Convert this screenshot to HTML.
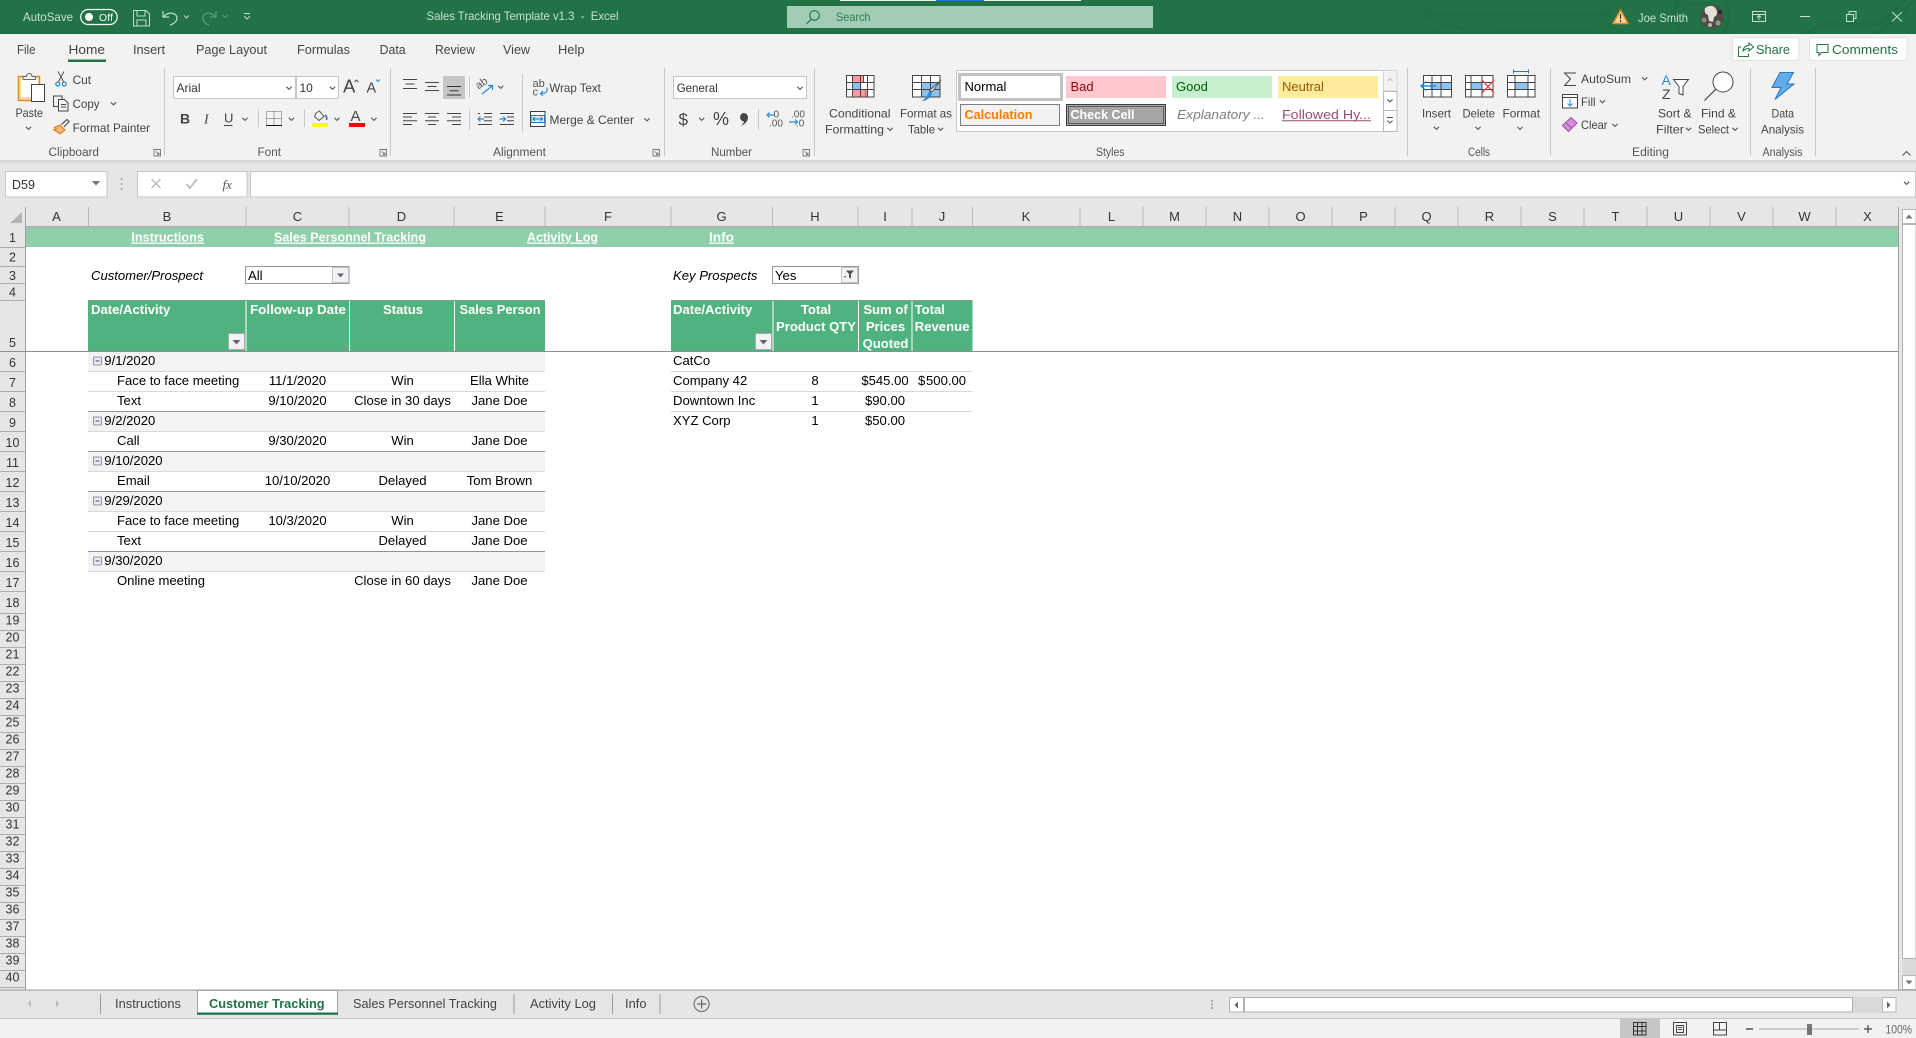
<!DOCTYPE html>
<html lang="en">
<head>
<meta charset="utf-8">
<title>Sales Tracking Template v1.3 - Excel</title>
<style>
html,body{margin:0;padding:0;background:#fff;width:1916px;height:1038px;overflow:hidden}
svg{display:block;position:absolute;left:0;top:0}
text{font-family:"Liberation Sans",Arial,sans-serif;white-space:pre}
.tb{font-size:12px;fill:#c9e0d2}
.tab{font-size:13px;fill:#444}
.r{font-size:11.8px;fill:#444}
.lbl{font-size:11.5px;fill:#555}
.c{font-size:13.1px;fill:#000}
.m{text-anchor:middle}
.h{font-size:13.1px;font-weight:bold;fill:#fff}
.l{font-size:13px;font-weight:bold;fill:#fff;text-decoration:underline}
.col{font-size:13px;fill:#333;text-anchor:middle}
.row{font-size:12.5px;fill:#333;text-anchor:middle}
.st{font-size:12.5px;fill:#444}
.ic{fill:none;stroke:#444;stroke-width:1}
.bl{fill:none;stroke:#1f8fdc;stroke-width:1.2}
</style>
</head>
<body>
<svg width="1916" height="1038" viewBox="0 0 1916 1038" xmlns="http://www.w3.org/2000/svg">
<defs>
<path id="c" d="M-2.6-1.2L0 1.4L2.6-1.2" fill="none" stroke="#555" stroke-width="1.1"/>
<path id="d" d="M-4-2H4L0 2.5Z" fill="#777"/>
<g id="fb"><rect x=".5" y=".5" width="16" height="16" fill="#f1f1f8" stroke="#a8a8a8"/><path d="M4.5 7h8L8.5 11.5Z" fill="#666"/></g>
<g id="exp"><rect x="93.5" y=".5" width="8" height="8" rx="1" fill="#e9ecf3" stroke="#8d93a6"/><path d="M95.5 4.5h4" stroke="#40465a"/></g>
</defs>

<!-- title bar -->
<rect width="1916" height="34" fill="#217346"/>
<rect x="840" y="0" width="241" height="1" fill="#f0f0f0"/><rect x="936" y="0" width="48" height="1" fill="#1a78d0"/>
<g fill="none" stroke="#1f6d42">
<path d="M1429 14H1607" stroke-width="3"/><circle cx="1429" cy="14" r="3.5" stroke-width="2"/><circle cx="1607" cy="14" r="3.5" stroke-width="2"/>
<circle cx="1450" cy="45" r="20" stroke-width="3"/><path d="M1499 31H1590" stroke-width="3"/><circle cx="1495" cy="31" r="3" stroke-width="2"/>
<path d="M1607 24L1625 34" stroke-width="3"/>
<circle cx="1702" cy="15" r="27" stroke-width="4"/><path d="M1690 4H1712L1700 30" stroke-width="3"/>
<path d="M1808 34L1820 24H1880L1905 0" stroke-width="3"/><path d="M1878 34L1916 0" stroke-width="3"/>
</g>
<text class="tb" x="23" y="21" textLength="50" lengthAdjust="spacingAndGlyphs">AutoSave</text>
<rect x="80.7" y="9.5" width="36.5" height="15" rx="7.5" fill="none" stroke="#fff" stroke-width="1.2"/>
<circle cx="89" cy="17" r="4" fill="#fff"/>
<text x="99" y="21" font-size="10.5" fill="#fff" textLength="14">Off</text>
<g fill="none" stroke="#c0dccb" stroke-width="1"><path d="M133.5 10.500H146L149.500 14V26H133.500Z"/><path d="M137 10.500V16H145V10.500M137 26V20H146V26"/></g>
<g fill="none" stroke="#c0dccb" stroke-width="1.2"><path d="M163 11V17H169M163.500 17C168 11 177 12.500 177 18C177 21 174 24 170 25"/></g>
<g fill="none" stroke="#5f9c7c" stroke-width="1.2"><path d="M216 11V17H210M215.500 17C211 11 203 12.500 203 18C203 21 205 24 209 25"/></g>
<path d="M222.500 15l2.500 2.500 2.500-2.500" fill="none" stroke="#5f9c7c"/>
<path d="M184 15.500l2.500 2.500 2.500-2.500" fill="none" stroke="#c0dccb"/>
<path d="M244 13.500h6M244 16l3 3 3-3" fill="none" stroke="#c0dccb"/>
<text class="tb" x="426.500" y="20" textLength="192" lengthAdjust="spacingAndGlyphs">Sales Tracking Template v1.3  -  Excel</text>
<rect x="787" y="6" width="366" height="22" fill="#a0cdb4"/>
<circle cx="814.500" cy="15.500" r="4.800" fill="none" stroke="#217346" stroke-width="1.1"/><path d="M811 19.500L806.500 24" stroke="#217346" stroke-width="1.2"/>
<text x="836" y="21" font-size="12" fill="#2f7d52" textLength="34.500" lengthAdjust="spacingAndGlyphs">Search</text>
<path d="M1620.500 10L1628 23.500H1613Z" fill="#fbd9a3" stroke="#e8861a" stroke-width="1.4"/><path d="M1620.500 14v5M1620.500 20v2" stroke="#333" stroke-width="1.200"/>
<text class="tb" x="1638" y="22" textLength="50" lengthAdjust="spacingAndGlyphs">Joe Smith</text>
<circle cx="1712" cy="17" r="12" fill="#4c4c48"/>
<path d="M1705 8c4-3 9-3 11 1 2 3 1 7-2 8l-1 5-4-1-1-6c-3-1-4-4-3-7z" fill="#e4e0d6"/>
<circle cx="1704" cy="20" r="2.500" fill="#8b8a78"/><circle cx="1718" cy="23" r="2.500" fill="#9a9c8c"/><circle cx="1720" cy="12" r="2" fill="#2a2a28"/><circle cx="1710" cy="25" r="2" fill="#b8b6a4"/>
<g fill="none" stroke="#c8dfd1" stroke-width="1">
<rect x="1752.500" y="11.500" width="13" height="10"/><path d="M1752.500 14.500h13M1759 20v-4M1757 17.500l2-2 2 2"/>
<path d="M1800 16.500h10"/>
<path d="M1846.500 14.500h7v7h-7zM1849 14.500v-3h7v7h-2.500"/>
<path d="M1892 12l10 9.500M1902 12l-10 9.500"/>
</g>

<!-- ribbon -->
<rect y="34" width="1916" height="126" fill="#f3f2f1"/>
<rect y="160" width="1916" height="48" fill="#e6e6e6"/>
<rect y="160" width="1916" height="2" fill="#d5d5d5"/><rect y="162" width="1916" height="2" fill="#dfdfdf"/>
<text class="tab" x="17" y="54" textLength="18.500" lengthAdjust="spacingAndGlyphs">File</text>
<text class="tab" x="68.500" y="54" textLength="36.500" lengthAdjust="spacingAndGlyphs">Home</text>
<rect x="68" y="59.500" width="38" height="2.500" fill="#217346"/>
<text class="tab" x="133" y="54" textLength="32" lengthAdjust="spacingAndGlyphs">Insert</text>
<text class="tab" x="196" y="54" textLength="71" lengthAdjust="spacingAndGlyphs">Page Layout</text>
<text class="tab" x="297" y="54" textLength="53" lengthAdjust="spacingAndGlyphs">Formulas</text>
<text class="tab" x="379.600" y="54" textLength="26" lengthAdjust="spacingAndGlyphs">Data</text>
<text class="tab" x="435" y="54" textLength="40" lengthAdjust="spacingAndGlyphs">Review</text>
<text class="tab" x="503" y="54" textLength="27" lengthAdjust="spacingAndGlyphs">View</text>
<text class="tab" x="558" y="54" textLength="26.500" lengthAdjust="spacingAndGlyphs">Help</text>
<rect x="1732.500" y="37.500" width="66.500" height="23" rx="2" fill="#fff" stroke="#e3e2e1"/>
<rect x="1809.500" y="37.500" width="97.500" height="23" rx="2" fill="#fff" stroke="#e3e2e1"/>
<path d="M1741 47h-2.500v9.500h10v-3M1743 51c.5-4 3-5.500 6-5.500v-2.500l4.500 4-4.500 4v-2.500c-2.500 0-4.500 1-6 2.500z" fill="none" stroke="#217346"/>
<text x="1756" y="54" font-size="13" fill="#217346" textLength="34" lengthAdjust="spacingAndGlyphs">Share</text>
<path d="M1817 44.500h11v8h-6.500l-2.500 3v-3h-2z" fill="none" stroke="#217346"/>
<text x="1832" y="54" font-size="13" fill="#217346" textLength="66" lengthAdjust="spacingAndGlyphs">Comments</text>

<!-- group separators -->
<g stroke="#c8c8c8" stroke-width="1">
<path d="M164.500 68V156M390.500 68V156M664.500 68V156M814.500 68V156M1407.500 68V156M1550.500 68V156M1750.500 68V156M1815.500 68V156"/>
<path d="M522.500 74V132M469.500 77V97M469.500 109V130M258.500 109V127M304.500 109V127M758.500 109V130"/>
</g>
<g class="lbl">
<text x="48.500" y="156" class="lbl" textLength="50.500" lengthAdjust="spacingAndGlyphs">Clipboard</text>
<text x="257.500" y="156" class="lbl" textLength="23.500" lengthAdjust="spacingAndGlyphs">Font</text>
<text x="493" y="156" class="lbl" textLength="53" lengthAdjust="spacingAndGlyphs">Alignment</text>
<text x="711" y="156" class="lbl" textLength="41" lengthAdjust="spacingAndGlyphs">Number</text>
<text x="1096" y="156" class="lbl" textLength="28.500" lengthAdjust="spacingAndGlyphs">Styles</text>
<text x="1468" y="156" class="lbl" textLength="22" lengthAdjust="spacingAndGlyphs">Cells</text>
<text x="1632" y="156" class="lbl" textLength="37" lengthAdjust="spacingAndGlyphs">Editing</text>
<text x="1762.500" y="156" class="lbl" textLength="40" lengthAdjust="spacingAndGlyphs">Analysis</text>
</g>
<g fill="none" stroke="#777" stroke-width=".9">
<path d="M154 149.500h6.500v6.500h-6.500zM156 151.500l3 3M159 152.500v2h-2"/>
<path d="M380 149.500h6.500v6.500h-6.500zM382 151.500l3 3M385 152.500v2h-2"/>
<path d="M653 149.500h6.500v6.500h-6.500zM655 151.500l3 3M658 152.500v2h-2"/>
<path d="M803 149.500h6.500v6.500h-6.500zM805 151.500l3 3M808 152.500v2h-2"/>
</g>

<!-- clipboard -->
<rect x="18.500" y="76.500" width="21" height="24" fill="#fbd9a6" stroke="#e08a24" stroke-width="1.400"/>
<rect x="21" y="78.500" width="17" height="18.500" fill="#fff"/>
<path d="M23 79.500v-3h3.500c.5-4 5-4 5.500 0h3.500v3z" fill="#f3f2f1" stroke="#666"/>
<rect x="31.500" y="84.500" width="13" height="17" fill="#fff" stroke="#444"/>
<text class="r" x="15.500" y="117" textLength="27.500" lengthAdjust="spacingAndGlyphs">Paste</text>
<use href="#c" x="28.500" y="128"/>
<g fill="none" stroke="#555"><path d="M58 71.500l5.500 10M64 71.500l-5.500 10"/></g>
<g fill="none" stroke="#1f8fdc" stroke-width="1.200"><circle cx="57.800" cy="84" r="2"/><circle cx="64.300" cy="84" r="2"/></g>
<text class="r" x="72.600" y="84" textLength="18.500" lengthAdjust="spacingAndGlyphs">Cut</text>
<path d="M58 106.500h-4.500v-10.500h8.500v3" fill="none" stroke="#444"/><path d="M58.500 99.500h6l3.500 3.500v8h-9.500zM61 104.500h5M61 107h5" fill="none" stroke="#444"/>
<text class="r" x="72.600" y="108" textLength="27" lengthAdjust="spacingAndGlyphs">Copy</text>
<use href="#c" x="113.500" y="103.500"/>
<path d="M60 125l5 5-5 4-6.500-4.500 3-.5-2-1.500z" fill="#f5b56a" stroke="#d9791b"/><path d="M61.500 124.500l5.500-5 2 2-5 5.500" fill="none" stroke="#555" stroke-width="1.200"/>
<text class="r" x="72.600" y="132" textLength="77.500" lengthAdjust="spacingAndGlyphs">Format Painter</text>

<!-- font -->
<rect x="173.500" y="76.500" width="122" height="22" fill="#fff" stroke="#c6c6c6"/>
<rect x="296.500" y="76.500" width="42" height="22" fill="#fff" stroke="#c6c6c6"/>
<text x="176.500" y="92" font-size="12" fill="#333">Arial</text>
<text x="299.500" y="92" font-size="12" fill="#333">10</text>
<use href="#c" x="289" y="88"/><use href="#c" x="332.500" y="88"/>
<text x="343" y="92.500" font-size="18.500" fill="#444" textLength="12">A</text>
<path d="M354.500 82l2-2 2 2" fill="none" stroke="#555"/>
<text x="366.500" y="92.500" font-size="14.500" fill="#444" textLength="9.500">A</text>
<path d="M376 79.500l2 2 2-2" fill="none" stroke="#1f8fdc"/>
<text x="180" y="123.500" font-size="14" font-weight="bold" fill="#444">B</text>
<text x="204" y="123.500" font-size="14" font-style="italic" fill="#444" style="font-family:'Liberation Serif',serif">I</text>
<text x="224" y="122.500" font-size="13" fill="#444">U</text><path d="M224 125.500h8.500" stroke="#444"/>
<use href="#c" x="245" y="119"/>
<path d="M266.500 111.500h15v14h-15zM274 111.500v14M266.500 118.500h15" fill="none" stroke="#666" stroke-dasharray="1 1"/><path d="M266 125.500h16" stroke="#111"/>
<use href="#c" x="291.400" y="119"/>
<path d="M316 113l3.500-2 4.500 5.500-5 4-4.500-4z" fill="#f3f2f1" stroke="#555"/><path d="M325 115c1.500 1 2 3 1.500 5" fill="none" stroke="#1f78c8" stroke-width="1.500"/>
<rect x="312" y="123" width="16" height="4" fill="#ffff00"/>
<use href="#c" x="337" y="119"/>
<text x="350.500" y="121" font-size="15" fill="#444">A</text>
<rect x="349" y="123" width="16" height="4" fill="#ff0000"/>
<use href="#c" x="374" y="119"/>

<!-- alignment -->
<g class="ic" stroke="#444">
<path d="M403 79.500h14M405.500 84h9M403 88.500h14"/>
<path d="M425 82.500h14M427.500 86.500h9M425 90.500h14"/>
<path d="M403 113.500h14M403 117h9M403 120.700h14M403 124.500h9"/>
<path d="M425 113.500h14M428 117h8M425 120.700h14M428 124.500h8"/>
<path d="M447 113.500h14M452 117h9M447 120.700h14M452 124.500h9"/>
<path d="M484 113.500h8M484 117h8M484 120.700h8M478 124.500h14M478 113.500h2"/>
<path d="M500 113.500h14M507 117h7M507 120.700h7M500 124.500h14"/>
</g>
<rect x="443" y="76" width="22" height="23" fill="#c6c6c6"/>
<path d="M447 86.500h14M449.500 90.700h9M447 95h14" stroke="#333" fill="none"/>
<path class="bl" d="M484 119h-6M480.500 116.500L478 119l2.500 2.500"/>
<path class="bl" d="M499.500 119h6M503 116.500l2.500 2.500-2.500 2.500"/>
<text x="477" y="87" font-size="11" fill="#555" transform="rotate(-35 482 86)">ab</text>
<path class="bl" d="M482 94l10-8M488 85.500h4.500V90"/>
<use href="#c" x="500.700" y="87"/>
<text x="532.500" y="87" font-size="11" fill="#555">ab</text><text x="532.500" y="95.500" font-size="11" fill="#555">c</text>
<path class="bl" d="M547 87.500c1 5-2 6-6.500 6M543 91l-2.500 2.500 2.500 2.500"/>
<text class="r" x="549.400" y="92" textLength="51.500" lengthAdjust="spacingAndGlyphs">Wrap Text</text>
<rect x="530.500" y="111.500" width="14.500" height="15" fill="#fff" stroke="#3b3b3b"/>
<rect x="531" y="115.500" width="13.500" height="7" fill="#d6e8f6" stroke="#1f78c8"/>
<path d="M533 119h9.500M535 117.300L533 119l2 1.700M540.500 117.300l2 1.700-2 1.700" fill="none" stroke="#1f78c8"/>
<text class="r" x="549.500" y="124" textLength="84.500" lengthAdjust="spacingAndGlyphs">Merge &amp; Center</text>
<use href="#c" x="647" y="119.500"/>

<!-- number -->
<rect x="673.500" y="76.500" width="133" height="22" fill="#fff" stroke="#c6c6c6"/>
<text x="676.700" y="92" font-size="12" fill="#333" textLength="41" lengthAdjust="spacingAndGlyphs">General</text>
<use href="#c" x="800" y="88"/>
<text x="678.500" y="125" font-size="17" fill="#444">$</text>
<use href="#c" x="701.700" y="119"/>
<text x="713" y="125" font-size="18" fill="#444" textLength="15">%</text>
<path d="M743.500 113a4.300 4.300 0 0 1 4.500 4.500c0 3.500-3 7-7.500 8.500 2-1.500 3.200-3 3.500-4.500a4.300 4.300 0 0 1-.5-8.500z" fill="#444"/>
<text x="773.500" y="117.500" font-size="10" fill="#555">0</text><text x="769" y="126.500" font-size="10" fill="#555">.00</text>
<path class="bl" d="M774 115h-7M769.500 112.500L767 115l2.500 2.500"/>
<text x="791" y="117.500" font-size="10" fill="#555">.00</text><text x="796" y="126.500" font-size="10" fill="#555">.0</text>
<path class="bl" d="M789 122h8M795 119.500l2.500 2.500-2.500 2.500"/>

<!-- conditional / table icons -->
<g>
<rect x="846.500" y="75.500" width="27.500" height="21.500" fill="#fff"/>
<rect x="852.500" y="75.500" width="11" height="7" fill="#ff9aa0" stroke="#c0272d"/>
<rect x="852.500" y="82.500" width="8" height="7" fill="#8cc2ec"/>
<rect x="852.500" y="89.500" width="13.500" height="7.500" fill="#ff9aa0" stroke="#c0272d"/>
<path d="M846.500 75.500h27.500v21.500h-27.500zM846.500 82.500h27.500M846.500 89.500h27.500M852.500 75.500v21.500M860.500 75.500v21.500M867.500 75.500v21.500" fill="none" stroke="#444"/>
</g>
<text class="r" x="829" y="117.500" textLength="61.500" lengthAdjust="spacingAndGlyphs">Conditional</text>
<text class="r" x="825" y="133.500" textLength="59" lengthAdjust="spacingAndGlyphs">Formatting</text>
<use href="#c" x="890" y="129"/>
<rect x="912.500" y="75.500" width="27.500" height="21.500" fill="#fff"/>
<rect x="921.500" y="82.500" width="18.500" height="14.500" fill="#8cc2ec"/>
<path d="M912.500 75.500h27.500v21.500h-27.500zM912.500 82.500h27.500M912.500 89.500h27.500M921.500 75.500v21.500M930.500 75.500v21.500" fill="none" stroke="#444"/>
<path d="M941 80l-9 12-2.500-1.500z" fill="#f3f2f1" stroke="#555"/>
<path d="M929 91c-1 4-3 7-7 10 4 0 9-3 10-8z" fill="#2b8fdc"/>
<text class="r" x="900" y="117.500" textLength="52" lengthAdjust="spacingAndGlyphs">Format as</text>
<text class="r" x="908" y="133.500" textLength="27" lengthAdjust="spacingAndGlyphs">Table</text>
<use href="#c" x="940.500" y="129"/>

<!-- style gallery -->
<rect x="956.500" y="70.500" width="427" height="61" fill="#fff" stroke="#c8c8c8"/>
<rect x="959.500" y="74.500" width="102" height="25" fill="#fff" stroke="#c2c2c2" stroke-width="3"/>
<text x="964.500" y="91" font-size="13" fill="#000">Normal</text>
<rect x="1066" y="76" width="100" height="22" fill="#ffc7ce"/><text x="1070.500" y="91" font-size="13" fill="#9c0006">Bad</text>
<rect x="1172" y="76" width="100" height="22" fill="#c6efce"/><text x="1176" y="91" font-size="13" fill="#006100">Good</text>
<rect x="1278" y="76" width="100" height="22" fill="#ffeb9c"/><text x="1282" y="91" font-size="13" fill="#9c5700">Neutral</text>
<rect x="960.500" y="104.500" width="99" height="21" fill="#f2f2f2" stroke="#7f7f7f"/>
<text x="964.500" y="119" font-size="13" font-weight="bold" fill="#fa7d00" textLength="68" lengthAdjust="spacingAndGlyphs">Calculation</text>
<rect x="1066.500" y="104.500" width="99" height="21" fill="#a5a5a5" stroke="#3f3f3f" stroke-width="1"/>
<rect x="1068.500" y="106.500" width="95" height="17" fill="none" stroke="#3f3f3f" stroke-width=".7"/>
<text x="1070.500" y="119" font-size="13" font-weight="bold" fill="#fff" textLength="64" lengthAdjust="spacingAndGlyphs">Check Cell</text>
<text x="1177" y="119" font-size="13" font-style="italic" fill="#7f7f7f" textLength="88" lengthAdjust="spacingAndGlyphs">Explanatory ...</text>
<text x="1282" y="119" font-size="13" fill="#954f72" textLength="89" lengthAdjust="spacingAndGlyphs">Followed Hy...</text>
<path d="M1282 120.700h89" stroke="#954f72"/>
<rect x="1383.500" y="70.500" width="13.500" height="20.500" fill="#f3f2f1" stroke="#d5d5d5"/>
<rect x="1383.500" y="91.500" width="13.500" height="19" fill="#fff" stroke="#b8b8b8"/>
<rect x="1383.500" y="110.500" width="13.500" height="21" fill="#fff" stroke="#b8b8b8"/>
<path d="M1387.500 81l2.500-2.500 2.500 2.500" fill="none" stroke="#bbb"/>
<use href="#c" x="1390" y="100.500"/>
<path d="M1387 117.500h6M1387.500 120.500l2.500 2.500 2.500-2.500" fill="none" stroke="#555"/>

<!-- cells -->
<rect x="1423.500" y="75.500" width="28" height="21.500" fill="#fff"/>
<rect x="1430" y="82.500" width="21" height="7" fill="#8cc2ec"/>
<path d="M1423.500 75.500h28v21.500h-28zM1423.500 82.500h28M1423.500 89.500h28M1432 75.500v21.500M1441 75.500v21.500" fill="none" stroke="#444"/>
<path d="M1421 86h15M1426 81.500L1421 86l5 4.500" fill="none" stroke="#1f8fdc" stroke-width="1.400"/>
<text class="r" x="1422" y="117.500" textLength="29" lengthAdjust="spacingAndGlyphs">Insert</text><use href="#c" x="1436.400" y="128"/>
<rect x="1465.500" y="75.500" width="27.500" height="21.500" fill="#fff"/>
<rect x="1471" y="82.500" width="11" height="7" fill="#8cc2ec"/>
<path d="M1465.500 75.500h27.500v21.500h-27.500zM1465.500 82.500h27.500M1465.500 89.500h27.500M1471 75.500v21.500M1482 75.500v21.500" fill="none" stroke="#444"/>
<path d="M1482 80l12 13M1494 80l-12 13" stroke="#e8484a" stroke-width="1.300"/>
<text class="r" x="1462.500" y="117.500" textLength="32.500" lengthAdjust="spacingAndGlyphs">Delete</text><use href="#c" x="1478" y="128"/>
<rect x="1507.500" y="75.500" width="27.500" height="21.500" fill="#fff"/>
<rect x="1515" y="82.500" width="13" height="7" fill="#8cc2ec"/>
<path d="M1507.500 75.500h27.500v21.500h-27.500zM1507.500 82.500h27.500M1507.500 89.500h27.500M1515 75.500v21.500M1528 75.500v21.500" fill="none" stroke="#444"/>
<path d="M1513.500 71.500h15M1513.500 69.500v4M1528.500 69.500v4" stroke="#1f78c8"/>
<text class="r" x="1502.500" y="117.500" textLength="37.500" lengthAdjust="spacingAndGlyphs">Format</text><use href="#c" x="1520" y="128"/>

<!-- editing -->
<path d="M1576 73h-11.500l6 6-6 6.500H1576" fill="none" stroke="#444"/>
<text class="r" x="1581" y="83" textLength="50" lengthAdjust="spacingAndGlyphs">AutoSum</text><use href="#c" x="1644.600" y="78.500"/>
<rect x="1562.500" y="94.500" width="15" height="13.500" fill="#fff" stroke="#444"/><path d="M1563 97.500h14" stroke="#444"/>
<path d="M1570 99v7M1567.500 103.500l2.500 2.500 2.500-2.500" fill="none" stroke="#1f8fdc"/>
<text class="r" x="1581" y="106" textLength="14.500" lengthAdjust="spacingAndGlyphs">Fill</text><use href="#c" x="1602.500" y="101.500"/>
<path d="M1571 117.500l6 5.500-8.500 8.500-6-6z" fill="#d28ed8" stroke="#a54aab"/><path d="M1565.500 122.500l6 5.500" stroke="#a54aab" fill="none"/>
<text class="r" x="1581" y="129" textLength="26.500" lengthAdjust="spacingAndGlyphs">Clear</text><use href="#c" x="1615" y="125"/>
<text x="1661.500" y="85" font-size="14" fill="#1f8fdc">A</text>
<text x="1662" y="99" font-size="14" fill="#444">Z</text>
<path d="M1673.500 79.500h15l-5.500 7v8.500l-4-1.500v-7z" fill="#fff" stroke="#444"/>
<text class="r" x="1658" y="117.500" textLength="33.500" lengthAdjust="spacingAndGlyphs">Sort &amp;</text>
<text class="r" x="1656" y="133.500" textLength="28" lengthAdjust="spacingAndGlyphs">Filter</text><use href="#c" x="1688.500" y="129"/>
<circle cx="1723" cy="82" r="10" fill="#fff" stroke="#444"/><path d="M1716 89l-11.500 11.500" stroke="#444" stroke-width="1.200"/>
<text class="r" x="1701" y="117.500" textLength="35" lengthAdjust="spacingAndGlyphs">Find &amp;</text>
<text class="r" x="1698" y="133.500" textLength="31" lengthAdjust="spacingAndGlyphs">Select</text><use href="#c" x="1735" y="129"/>

<!-- analysis -->
<path d="M1780 72.500H1793.500L1787 84H1794L1775 99.500L1781 87.500H1772Z" fill="#62aceb" stroke="#2379c4"/>
<text class="r" x="1771.500" y="117.500" textLength="22.500" lengthAdjust="spacingAndGlyphs">Data</text>
<text class="r" x="1761" y="133.500" textLength="43" lengthAdjust="spacingAndGlyphs">Analysis</text>
<path d="M1902.500 155.500l4-4 4 4" fill="none" stroke="#555" stroke-width="1.100"/>

<!-- formula bar -->
<rect x="5.500" y="171.500" width="101.500" height="25.500" fill="#fff" stroke="#c6c6c6"/>
<text x="12" y="189" font-size="12.500" fill="#333">D59</text>
<use href="#d" x="96" y="183"/>
<path d="M121.500 178v2M121.500 183v2M121.500 188v2" stroke="#999" stroke-width="1.500"/>
<rect x="137.500" y="171.500" width="109.500" height="25.500" fill="#fff" stroke="#c6c6c6"/>
<path d="M151.500 179l9 9M160.500 179l-9 9" stroke="#bbb" stroke-width="1.500"/>
<path d="M186.500 184l3.500 4 7-9" fill="none" stroke="#bbb" stroke-width="1.800"/>
<text x="222.500" y="189" font-size="13" font-style="italic" fill="#555" style="font-family:'Liberation Serif',serif">fx</text>
<rect x="250.500" y="171.500" width="1665" height="25.500" fill="#fff" stroke="#c6c6c6"/>
<use href="#c" x="1906.600" y="183"/>

<!-- sheet area -->
<rect x="0" y="207" width="1916" height="20" fill="#e6e6e6"/>
<rect x="0" y="207" width="26" height="783" fill="#e6e6e6"/>
<rect x="26" y="227" width="1873" height="763" fill="#fff"/>
<rect x="1899" y="207" width="17" height="783" fill="#e6e6e6"/>
<path d="M22 212V223H10Z" fill="#b4b4b4"/>
<path d="M26 227H1899" stroke="#9c9c9c" stroke-width="1.500"/>
<path d="M25.500 207V990M1898.500 207V990" stroke="#a0a0a0" stroke-width="1"/>
<path d="M88.500 207V226M246 207V226M349 207V226M454 207V226M545 207V226M671 207V226M772.500 207V226M858 207V226M912 207V226M972.500 207V226M1080 207V226M1143 207V226M1206 207V226M1269 207V226M1332 207V226M1395 207V226M1458 207V226M1521 207V226M1584 207V226M1647 207V226M1710 207V226M1773 207V226M1836 207V226" stroke="#b8b8b8"/>
<path d="M0 247.500h25M0 266.500h25M0 283.500h25M0 300.500h25M0 371.500h25M0 391.500h25M0 411.500h25M0 431.500h25M0 451.500h25M0 471.500h25M0 491.500h25M0 511.500h25M0 531.500h25M0 551.500h25M0 571.500h25M0 591.500h25M0 613.500h25M0 630.500h25M0 647.500h25M0 664.500h25M0 681.500h25M0 698.500h25M0 715.500h25M0 732.500h25M0 749.500h25M0 766.500h25M0 783.500h25M0 800.500h25M0 817.500h25M0 834.500h25M0 851.500h25M0 868.500h25M0 885.500h25M0 902.500h25M0 919.500h25M0 936.500h25M0 953.500h25M0 970.500h25M0 987.500h25" stroke="#adadad"/>
<g>
<text class="col" x="56.500" y="221">A</text><text class="col" x="167" y="221">B</text><text class="col" x="297.500" y="221">C</text><text class="col" x="401.500" y="221">D</text><text class="col" x="499.500" y="221">E</text><text class="col" x="608" y="221">F</text><text class="col" x="721.500" y="221">G</text><text class="col" x="815" y="221">H</text><text class="col" x="885" y="221">I</text><text class="col" x="942" y="221">J</text><text class="col" x="1026" y="221">K</text><text class="col" x="1111.500" y="221">L</text><text class="col" x="1174.500" y="221">M</text><text class="col" x="1237.500" y="221">N</text><text class="col" x="1300.500" y="221">O</text><text class="col" x="1363.500" y="221">P</text><text class="col" x="1426.500" y="221">Q</text><text class="col" x="1489.500" y="221">R</text><text class="col" x="1552.500" y="221">S</text><text class="col" x="1615.500" y="221">T</text><text class="col" x="1678.500" y="221">U</text><text class="col" x="1741.500" y="221">V</text><text class="col" x="1804.500" y="221">W</text><text class="col" x="1867.500" y="221">X</text>
</g>
<g>
<text class="row" x="12.500" y="242">1</text><text class="row" x="12.500" y="261.500">2</text><text class="row" x="12.500" y="280">3</text><text class="row" x="12.500" y="296.500">4</text><text class="row" x="12.500" y="347">5</text><text class="row" x="12.500" y="367">6</text><text class="row" x="12.500" y="387">7</text><text class="row" x="12.500" y="407">8</text><text class="row" x="12.500" y="427">9</text><text class="row" x="12.500" y="447">10</text><text class="row" x="12.500" y="467">11</text><text class="row" x="12.500" y="487">12</text><text class="row" x="12.500" y="507">13</text><text class="row" x="12.500" y="527">14</text><text class="row" x="12.500" y="547">15</text><text class="row" x="12.500" y="567">16</text><text class="row" x="12.500" y="587">17</text><text class="row" x="12.500" y="607">18</text><text class="row" x="12.500" y="624.500">19</text><text class="row" x="12.500" y="641.500">20</text><text class="row" x="12.500" y="658.500">21</text><text class="row" x="12.500" y="675.500">22</text><text class="row" x="12.500" y="692.500">23</text><text class="row" x="12.500" y="709.500">24</text><text class="row" x="12.500" y="726.500">25</text><text class="row" x="12.500" y="743.500">26</text><text class="row" x="12.500" y="760.500">27</text><text class="row" x="12.500" y="777.500">28</text><text class="row" x="12.500" y="794.500">29</text><text class="row" x="12.500" y="811.500">30</text><text class="row" x="12.500" y="828.500">31</text><text class="row" x="12.500" y="845.500">32</text><text class="row" x="12.500" y="862.500">33</text><text class="row" x="12.500" y="879.500">34</text><text class="row" x="12.500" y="896.500">35</text><text class="row" x="12.500" y="913.500">36</text><text class="row" x="12.500" y="930.500">37</text><text class="row" x="12.500" y="947.500">38</text><text class="row" x="12.500" y="964.500">39</text><text class="row" x="12.500" y="981.500">40</text>
</g>

<!-- row 1 -->
<rect x="26" y="228" width="1872" height="19" fill="#8fd0aa"/>
<text class="l" x="131.400" y="241.500" textLength="72.600" lengthAdjust="spacingAndGlyphs">Instructions</text>
<text class="l" x="274" y="241.500" textLength="152" lengthAdjust="spacingAndGlyphs">Sales Personnel Tracking</text>
<text class="l" x="527" y="241.500" textLength="71" lengthAdjust="spacingAndGlyphs">Activity Log</text>
<text class="l" x="709" y="241.500" textLength="25" lengthAdjust="spacingAndGlyphs">Info</text>

<!-- slicers -->
<text class="c" x="91" y="280" font-style="italic" textLength="112">Customer/Prospect</text>
<rect x="245.500" y="266.500" width="103.500" height="17" fill="#fff" stroke="#9a9a9a"/>
<text class="c" x="248" y="280">All</text>
<rect x="332.500" y="267.500" width="16" height="15" fill="#f1f1f8" stroke="#c4c4c4"/><path d="M337 273.500h7l-3.500 4z" fill="#666"/>
<text class="c" x="673" y="280" font-style="italic">Key Prospects</text>
<rect x="772.500" y="266.500" width="86" height="17" fill="#fff" stroke="#9a9a9a"/>
<text class="c" x="775" y="280">Yes</text>
<rect x="841.500" y="267.500" width="16" height="15" fill="#f1f1f8" stroke="#c4c4c4"/><path d="M846 270.500h8l-3 3.500v4.500l-2-1v-3.500z" fill="#555"/><path d="M843.500 276h3l-1.500 2z" fill="#777"/>

<!-- table 1 -->
<rect x="88" y="300" width="457" height="51" fill="#50b37f"/>
<rect x="88" y="300" width="457" height="1" fill="#7f9c8c"/>
<rect x="245.500" y="301" width="1" height="50" fill="#fff"/><rect x="349" y="301" width="1" height="50" fill="#fff"/><rect x="454" y="301" width="1" height="50" fill="#fff"/>
<text class="h" x="91" y="314">Date/Activity</text>
<text class="h" x="250" y="314" textLength="96" lengthAdjust="spacingAndGlyphs">Follow-up Date</text>
<text class="h m" x="403" y="314">Status</text>
<text class="h" x="459.500" y="314" textLength="81" lengthAdjust="spacingAndGlyphs">Sales Person</text>
<use href="#fb" x="228" y="333"/>

<!-- table 2 -->
<rect x="671" y="300" width="301.500" height="51" fill="#50b37f"/>
<rect x="671" y="300" width="301.500" height="1" fill="#7f9c8c"/>
<rect x="772.500" y="301" width="1" height="50" fill="#fff"/><rect x="858" y="301" width="1" height="50" fill="#fff"/><rect x="911.500" y="301" width="1" height="50" fill="#fff"/>
<text class="h" x="673" y="314">Date/Activity</text>
<text class="h m" x="816" y="314">Total</text>
<text class="h m" x="816" y="331">Product QTY</text>
<text class="h m" x="885.500" y="314">Sum of</text>
<text class="h m" x="885.500" y="331">Prices</text>
<text class="h m" x="885.500" y="348">Quoted</text>
<text class="h" x="914.600" y="314">Total</text>
<text class="h" x="914.600" y="331" textLength="55" lengthAdjust="spacingAndGlyphs">Revenue</text>
<use href="#fb" x="755" y="333"/>

<path d="M0 351.500H1898" stroke="#8e8e8e"/>

<!-- table 1 bands (group rows 6, 9, 11, 13, 16) -->
<g fill="#f3f3f3">
<rect x="88" y="352" width="457" height="19"/><rect x="88" y="412" width="457" height="19"/><rect x="88" y="452" width="457" height="19"/><rect x="88" y="492" width="457" height="19"/><rect x="88" y="552" width="457" height="19"/>
</g>
<path d="M88 371.500H545M88 391.500H545M88 431.500H545M88 471.500H545M88 511.500H545M88 531.500H545M88 571.500H545M671 371.500H972.500M671 391.500H972.500M671 411.500H972.500" stroke="#d9d9d9"/>
<path d="M88 411.500H545M88 451.500H545M88 491.500H545M88 551.500H545" stroke="#929292"/>
<use href="#exp" y="356.500"/><use href="#exp" y="416.500"/><use href="#exp" y="456.500"/><use href="#exp" y="496.500"/><use href="#exp" y="556.500"/>

<text class="c" x="104.300" y="365">9/1/2020</text>
<text class="c" x="117" y="385">Face to face meeting</text><text class="c m" x="297.500" y="385">11/1/2020</text><text class="c m" x="402.500" y="385">Win</text><text class="c m" x="499.500" y="385">Ella White</text>
<text class="c" x="117" y="405">Text</text><text class="c m" x="297.500" y="405">9/10/2020</text><text class="c m" x="402.500" y="405">Close in 30 days</text><text class="c m" x="499.500" y="405">Jane Doe</text>
<text class="c" x="104.300" y="425">9/2/2020</text>
<text class="c" x="117" y="445">Call</text><text class="c m" x="297.500" y="445">9/30/2020</text><text class="c m" x="402.500" y="445">Win</text><text class="c m" x="499.500" y="445">Jane Doe</text>
<text class="c" x="104.300" y="465">9/10/2020</text>
<text class="c" x="117" y="485">Email</text><text class="c m" x="297.500" y="485">10/10/2020</text><text class="c m" x="402.500" y="485">Delayed</text><text class="c m" x="499.500" y="485">Tom Brown</text>
<text class="c" x="104.300" y="505">9/29/2020</text>
<text class="c" x="117" y="525">Face to face meeting</text><text class="c m" x="297.500" y="525">10/3/2020</text><text class="c m" x="402.500" y="525">Win</text><text class="c m" x="499.500" y="525">Jane Doe</text>
<text class="c" x="117" y="545">Text</text><text class="c m" x="402.500" y="545">Delayed</text><text class="c m" x="499.500" y="545">Jane Doe</text>
<text class="c" x="104.300" y="565">9/30/2020</text>
<text class="c" x="117" y="585">Online meeting</text><text class="c m" x="402.500" y="585">Close in 60 days</text><text class="c m" x="499.500" y="585">Jane Doe</text>

<text class="c" x="673" y="365">CatCo</text>
<text class="c" x="673" y="385">Company 42</text><text class="c m" x="815" y="385">8</text><text class="c m" x="885" y="385">$545.00</text><text class="c" x="918" y="385">$</text><text class="c" x="926" y="385">500.00</text>
<text class="c" x="673" y="405">Downtown Inc</text><text class="c m" x="815" y="405">1</text><text class="c m" x="885" y="405">$90.00</text>
<text class="c" x="673" y="425">XYZ Corp</text><text class="c m" x="815" y="425">1</text><text class="c m" x="885" y="425">$50.00</text>

<!-- vertical scrollbar -->
<rect x="1902.500" y="209.500" width="13.500" height="14" fill="#fff" stroke="#b5b5b5"/><path d="M1905.500 218.500h7l-3.500-4z" fill="#777"/>
<rect x="1902.500" y="224" width="13.500" height="751" fill="#d9d9d9"/>
<rect x="1902.500" y="224.500" width="13.500" height="734" fill="#fff" stroke="#b5b5b5"/>
<rect x="1902.500" y="975.500" width="13.500" height="14" fill="#fff" stroke="#b5b5b5"/><path d="M1905.500 980.500h7l-3.500 4z" fill="#777"/>

<!-- tab bar -->
<rect y="990" width="1916" height="28" fill="#e6e6e6"/>
<rect y="989.500" width="1916" height="1.200" fill="#a4a4a4"/>
<rect y="1018" width="1916" height="1" fill="#c6c6c6"/>
<rect y="1019" width="1916" height="19" fill="#f3f2f1"/>
<path d="M31 1000l-3.500 3.500 3.500 3.500zM56 1000l3.500 3.500-3.500 3.500z" fill="#bcbcbc"/>
<path d="M100.500 994V1014M514 994V1014M612.500 994V1014M660 994V1014" stroke="#9a9a9a"/>
<text class="tab" x="115" y="1008" textLength="66" lengthAdjust="spacingAndGlyphs">Instructions</text>
<path d="M197.500 1014V990.500H337.500V1014" fill="#fff" stroke="#a4a4a4"/>
<rect x="197" y="1012.500" width="141" height="2.300" fill="#217346"/>
<text x="209" y="1008" font-size="13" font-weight="bold" fill="#217346" textLength="115.600" lengthAdjust="spacingAndGlyphs">Customer Tracking</text>
<text class="tab" x="353" y="1008" textLength="144" lengthAdjust="spacingAndGlyphs">Sales Personnel Tracking</text>
<text class="tab" x="530" y="1008" textLength="66" lengthAdjust="spacingAndGlyphs">Activity Log</text>
<text class="tab" x="625" y="1008" textLength="21.500" lengthAdjust="spacingAndGlyphs">Info</text>
<circle cx="701.600" cy="1004" r="7.500" fill="none" stroke="#777" stroke-width="1.200"/><path d="M697 1004h9.200M701.600 999.500v9" stroke="#666" stroke-width="1.200"/>

<!-- horizontal scrollbar -->
<path d="M1212 1000v2M1212 1003.500v2M1212 1007v2" stroke="#a5a5a5" stroke-width="1.800"/>
<rect x="1229.500" y="997.500" width="14" height="14.500" fill="#fff" stroke="#b5b5b5"/><path d="M1238 1001.500v7l-3.500-3.500z" fill="#666"/>
<rect x="1244" y="997" width="638" height="15.500" fill="#d9d9d9"/>
<rect x="1244.500" y="997.500" width="608" height="14.500" fill="#fff" stroke="#b0b0b0"/>
<rect x="1882.500" y="997.500" width="13.500" height="14.500" fill="#fff" stroke="#b5b5b5"/><path d="M1887 1001.500v7l3.500-3.500z" fill="#666"/>

<!-- status bar -->
<rect x="1620" y="1019" width="40" height="19" fill="#c6c6c6"/>
<path d="M1633.500 1022.500h12.500v12.500h-12.500zM1637.500 1022.500v12.500M1642 1022.500v12.500M1633.500 1026.500h12.500M1633.500 1031h12.500" fill="none" stroke="#333"/>
<path d="M1673.500 1022.500h13v12.500h-13zM1676.500 1025.500h7v7h-7zM1678 1027.500h4M1678 1029.500h4" fill="none" stroke="#444"/>
<path d="M1713.500 1022.500h13v12.500h-13zM1719.500 1022.500v7.500h-6M1719.500 1030h7" fill="none" stroke="#444"/>
<path d="M1746 1029h7" stroke="#444" stroke-width="1.400"/>
<rect x="1759" y="1028.500" width="100" height="1" fill="#a8a8a8"/>
<rect x="1807" y="1024" width="5" height="11" fill="#767676"/>
<path d="M1864 1029h8M1868 1025v8" stroke="#444" stroke-width="1.200"/>
<text x="1885.500" y="1033.500" font-size="11.500" fill="#666" textLength="26.500" lengthAdjust="spacingAndGlyphs">100%</text>
</svg>
</body>
</html>
